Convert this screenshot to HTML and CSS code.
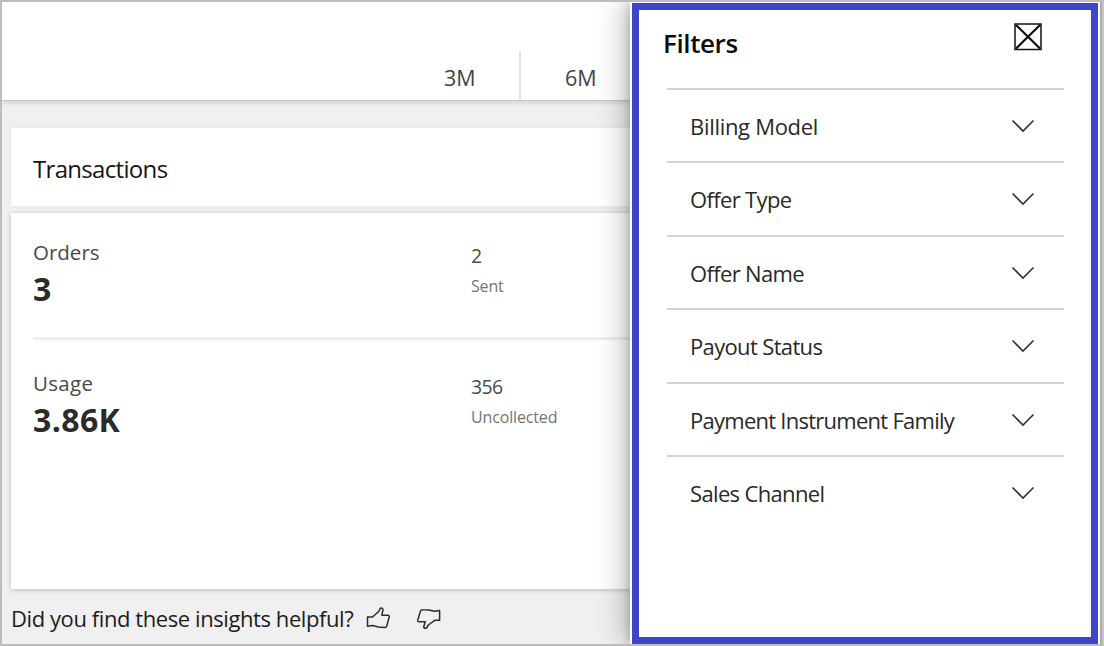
FILE: index.html
```html
<!DOCTYPE html>
<html lang="en">
<head>
<meta charset="utf-8">
<title>Transactions</title>
<link rel="stylesheet" href="styles.css">
</head>
<body>
<div class="app">
  <main class="page">
    <nav class="ranges">
      <span class="range range-3m">3M</span>
      <span class="range range-6m">6M</span>
    </nav>
    <section class="content">
      <header class="card title-card"><h1 class="title">Transactions</h1></header>
      <div class="card metrics">
        <div class="metric">
          <div class="primary"><div class="label">Orders</div><div class="value">3</div></div>
          <div class="secondary"><div class="count">2</div><div class="note">Sent</div></div>
        </div>
        <div class="metric">
          <div class="primary"><div class="label label-usage">Usage</div><div class="value">3.86K</div></div>
          <div class="secondary"><div class="count">356</div><div class="note">Uncollected</div></div>
        </div>
      </div>
      <footer class="feedback">
        <span class="question">Did you find these insights helpful?</span>
        <svg class="thumb" viewBox="0 0 26 24"><path d="M1.5 10 H6.5 L12.7 4.5 L14.3 1.3 Q16.3 .5 17 2.5 L15.8 8.3 H22 Q23.6 8.5 23.2 10 L20.6 19.5 Q20.2 20.5 19 20.4 L12.5 20 L6.5 18.6 L1.5 19.2 Z"/></svg>
        <svg class="thumb thumb-down" viewBox="0 0 26 24"><path d="M23.6 3.5 V13.3 H18.8 L12.3 18 L10.5 21 Q8.6 22 7.6 20.2 L9.2 14.7 H3 Q1.2 14.5 1.8 13 L4.5 4 Q5 2.7 6.5 2.8 L13 3 L18.6 4.3 Z"/></svg>
      </footer>
    </section>
  </main>
  <aside class="drawer">
    <div class="panel">
      <header class="panel-head">
        <h2 class="panel-title">Filters</h2>
        <svg class="close" viewBox="0 0 28 28"><rect x="1" y="1" width="26" height="25.5"/><path d="M2 2 L26 25.5 M26 2 L2 25.5"/></svg>
      </header>
      <ul class="filters">
        <li class="filter"><span class="name billing">Billing Model</span><svg class="chevron" viewBox="0 0 24 14"><path d="M1.5 1.5 L12 12 L22.5 1.5"/></svg></li>
        <li class="filter"><span class="name">Offer Type</span><svg class="chevron" viewBox="0 0 24 14"><path d="M1.5 1.5 L12 12 L22.5 1.5"/></svg></li>
        <li class="filter"><span class="name">Offer Name</span><svg class="chevron" viewBox="0 0 24 14"><path d="M1.5 1.5 L12 12 L22.5 1.5"/></svg></li>
        <li class="filter"><span class="name">Payout Status</span><svg class="chevron" viewBox="0 0 24 14"><path d="M1.5 1.5 L12 12 L22.5 1.5"/></svg></li>
        <li class="filter"><span class="name payment">Payment Instrument Family</span><svg class="chevron" viewBox="0 0 24 14"><path d="M1.5 1.5 L12 12 L22.5 1.5"/></svg></li>
        <li class="filter"><span class="name">Sales Channel</span><svg class="chevron" viewBox="0 0 24 14"><path d="M1.5 1.5 L12 12 L22.5 1.5"/></svg></li>
      </ul>
    </div>
  </aside>
</div>
</body>
</html>
```
FILE: styles.css
```css
* { box-sizing: border-box; }
body { margin: 0; font-family: "Open Sans", "Noto Sans", sans-serif; color: #222; }
h1, h2, ul { margin: 0; padding: 0; font-weight: 400; list-style: none; }
.app { display: flex; width: 1104px; height: 646px; overflow: hidden; border: 2px solid #bdbdbd; border-right-color: #c6c6c6; background: #fff; }
.page { width: 628px; flex: none; background: #f0f0f0; display: flex; flex-direction: column; }
.ranges { height: 99px; flex: none; background: #fff; display: flex; justify-content: flex-end; align-items: flex-end; border-bottom: 1px solid #c8c8c8; box-shadow: 0 2px 5px rgba(0,0,0,.13); }
.range { height: 49px; line-height: 54px; font-size: 21.5px; color: #444; }
.range-3m { width: 77px; border-right: 2px solid #e4e4e4; }
.range-6m { width: 109px; padding-left: 44px; }
.content { padding: 27px 0 0 9px; }
.card { background: #fff; }
.title-card { height: 78px; padding: 22px; box-shadow: 0 0 4px rgba(0,0,0,.05); }
.title { font-size: 24px; line-height: 38px; letter-spacing: -.68px; color: #151515; }
.metrics { margin-top: 7px; height: 376px; padding-left: 22px; box-shadow: 0 1px 5px rgba(0,0,0,.22); }
.metric { display: flex; height: 124px; padding-top: 24px; }
.metric + .metric { border-top: 3px solid #eee; height: 140px; padding-top: 28px; }
.primary { width: 438px; }
.label { font-size: 20.5px; line-height: 30px; color: #484848; }
.label-usage { letter-spacing: .3px; }
.value { font-size: 32px; line-height: 44px; font-weight: 700; letter-spacing: .4px; color: #2b2b2b; }
.secondary { padding-top: 3px; }
.count { font-size: 19.5px; line-height: 31px; letter-spacing: -.6px; color: #4c4c4c; }
.note { font-size: 16px; line-height: 30px; letter-spacing: -.15px; color: #747474; }
.feedback { display: flex; align-items: center; height: 56px; padding-top: 4px; }
.question { width: 355px; margin-top: -2px; white-space: nowrap; font-size: 22px; letter-spacing: -.42px; color: #1d1d1d; }
.thumb { width: 26px; height: 24px; flex: none; fill: none; stroke: #2c2c2c; stroke-width: 1.5; stroke-linejoin: round; }
.thumb-down { margin-left: 24px; }
.drawer { width: 472px; flex: none; padding: 1px 2px 0; background: #fff; border-right: 2px solid #adadad; box-shadow: -3px 0 28px rgba(0,0,0,.32), -1px 0 8px rgba(0,0,0,.16); clip-path: inset(0 0 0 -60px); }
.panel { height: 641px; border: 7px solid #3f45c9; padding: 0 27px 0 28px; }
.panel-head { height: 77.5px; display: flex; justify-content: space-between; padding: 12px 22px 0 0; }
.panel-title { font-size: 26px; line-height: 42px; font-weight: 600; letter-spacing: -.4px; color: #0c0c0c; margin-left: -4px; }
.close { width: 28px; height: 28px; margin-top: 1px; fill: none; stroke: #111; stroke-width: 1.5; }
.close path { stroke-width: 2.3; }
.filter { height: 73.5px; border-top: 2px solid #d3d3d3; display: flex; align-items: center; justify-content: space-between; padding: 1px 29px 0 23px; font-size: 22px; color: #292929; }
.name { white-space: nowrap; letter-spacing: -.65px; }
.billing { letter-spacing: -.3px; }
.payment { letter-spacing: -.74px; }
.chevron { width: 24px; height: 14px; fill: none; stroke: #333; stroke-width: 1.6; }
```
